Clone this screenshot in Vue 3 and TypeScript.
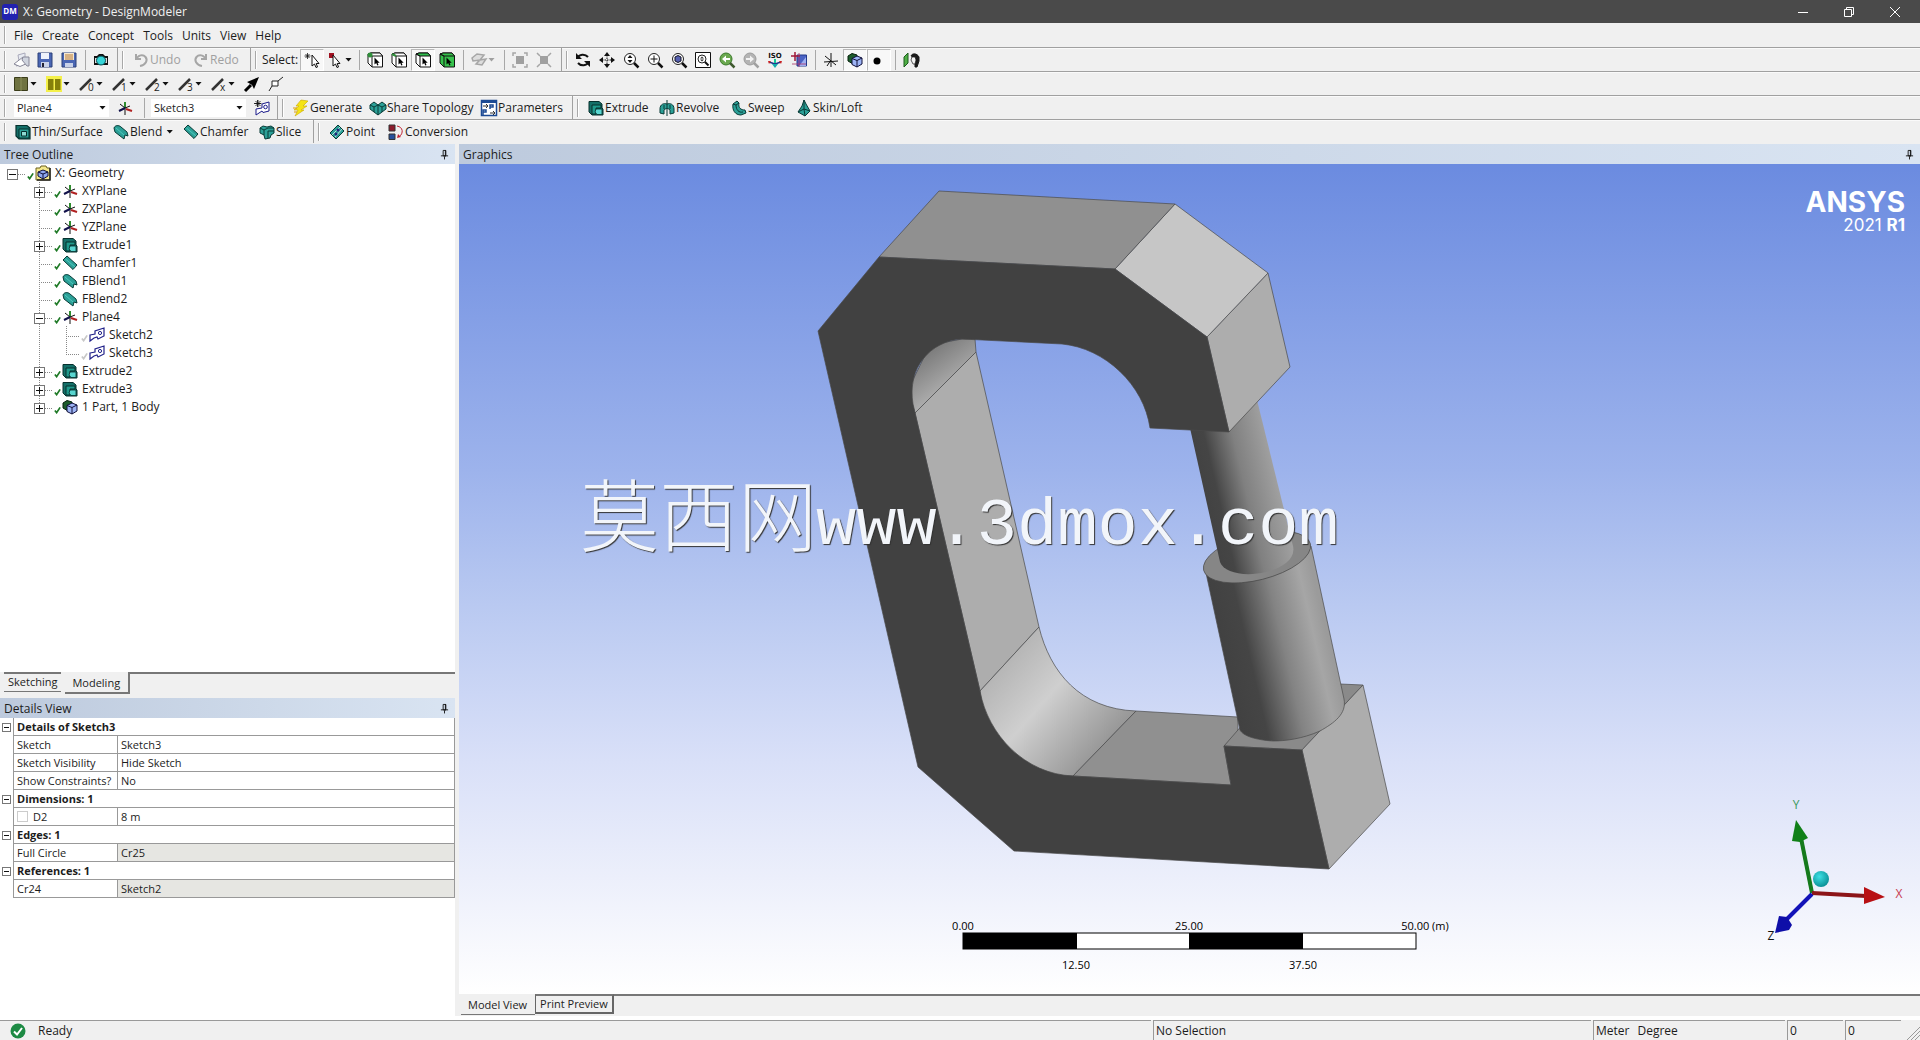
<script setup lang="ts">
import { ref } from 'vue'

interface ToolItem {
  kind: 'icon' | 'sep' | 'label' | 'combo'
  icon?: string
  text?: string
  title?: string
  width?: number
  caret?: boolean
  pressed?: boolean
  disabled?: boolean
  mid?: boolean
  options?: string[]
}

interface TreeNode {
  level: number
  text: string
  icon: string
  box?: 'plus' | 'minus'
  dim?: boolean
  last?: boolean
}

interface DetailRow {
  head?: boolean
  name: string
  value?: string
  check?: boolean
  locked?: boolean
}

const teal = '#1f9a8c'
const cube = (fill: string, top: string) =>
  `<path d="M1 2 4 1H13L15.500 4V15H5L1 11Z" fill="${fill}" stroke="#111"/><path d="M1 2 4 1H13L15.500 4H5Z" fill="${top}" stroke="#111"/><path d="M5 4V15M1 2 5 4" fill="none" stroke="#111"/><path d="M7.500 5.500V12.500L9.200 11 10.300 13.500 11.500 13 10.500 10.700H12.700Z" fill="#000"/>`
const axes =
  '<path d="M8 8V2" stroke="#2e8b2e" stroke-width="2"/><path d="M8 8V15M3 4 8 8 13 6" stroke="#111" fill="none"/><path d="M8 8 2 11" stroke="#11114a" stroke-width="2"/><path d="M9 9 15 11" stroke="#b02020" stroke-width="2"/>'
const lens = '<circle cx="7" cy="7" r="5.500" fill="#fff" stroke="#222"/><path d="M11 11 15.500 15.500" stroke="#111" stroke-width="2.500"/>'
const stroke = (n: string) =>
  `<path d="M1 14 12 3" stroke="#333" stroke-width="2.500"/><text x="9" y="15" font-family="Open Sans, sans-serif" font-size="10" fill="#222">${n}</text>`
const extrude = `<path d="M1 1.500H11L14 4V8L15 9V15H4L1 12Z" fill="#146f68" stroke="#06302d"/><path d="M4 5H13V8H8V14H4Z" fill="${teal}" stroke="#06302d"/><path d="M8 9H14V14.500H9L7 12Z" fill="#58d6d0" stroke="#06302d" stroke-width=".8"/>`
const blocks = '<path d="M1 4 5 1.500 10 3V9L6 12 1 9Z" fill="#1d5c2c" stroke="#06200c"/><path d="M5 6.500 10 4 15 6V12L10 15 5 12.500Z" fill="#9db4f5" stroke="#10103a"/><path d="M5 6.500 10 8.500 15 6M10 8.500V15" fill="none" stroke="#10103a"/>'

const icons: Record<string, string> = {
  open: '<path d="M5 3 12 1V12L3 14 6 9Z" fill="#e8ebf2" stroke="#aab"/><path d="M1 12 10 5 15 11 7 14.500Z" fill="#fff" stroke="#889"/><path d="M9 8 14 14H16V5H10Z" fill="#cfd4de" stroke="#889"/>',
  save: '<path d="M1 1H15V15H1Z" fill="#4a66b4" stroke="#2c4078"/><path d="M4 1H12V7H4Z" fill="#eef2fb"/><path d="M4 10H12V15H4Z" fill="#c9d2e8"/><path d="M5 11H7V15H5Z" fill="#223"/>',
  saveas: '<path d="M1 1H15V15H1Z" fill="#4a66b4" stroke="#2c4078"/><path d="M3 1H13V8H3Z" fill="#f6e9d2"/><path d="M4 3H12M4 5H12M4 7H12" stroke="#b77b36"/><path d="M4 11H12V15H4Z" fill="#c9d2e8"/>',
  camera: '<path d="M1 4H4L6 2H10L12 4H15V13H1Z" fill="#111"/><path d="M2 6H4V11H2ZM12 6H14V11H12Z" fill="#ddd"/><circle cx="8" cy="8.500" r="4.500" fill="#37d5d8" stroke="#0a4a50"/>',
  undo: '<path d="M3 2V7H8M3.500 7C5 3 10 2 12.500 5S13 13 7 14" fill="none" stroke="#a6a6a6" stroke-width="2"/>',
  redo: '<path d="M13 2V7H8M12.500 7C11 3 6 2 3.500 5S3 13 9 14" fill="none" stroke="#a6a6a6" stroke-width="2"/>',
  pick: '<path d="M3.500 1V7M.5 4H6.500M1.500 2 5.500 6M5.500 2 1.500 6" stroke="#111" stroke-width=".8"/><path d="M8 3V14L10.500 12 12 15.500 13.500 15 12.200 11.500H15Z" fill="#fff" stroke="#111"/>',
  mode: '<path d="M1 1H6V6H1Z" fill="#a01020"/><path d="M5 3V14L7.500 12 9 15.500 10.500 15 9.200 11.500H12Z" fill="#fff" stroke="#111"/>',
  selpoint: cube('#fff', '#fff') + '<circle cx="3" cy="3" r="2.500" fill="#2f8f3a"/>',
  seledge: cube('#fff', '#fff') + '<path d="M1 2 5 4" stroke="#2f8f3a" stroke-width="2"/>',
  selface: cube('#fff', '#2fbe4c'),
  selbody: cube('#36c24c', '#36c24c'),
  extend: '<path d="M1 6 6 2 13 3 9 8 2 9ZM5 12 9 8 15 7 11 13Z" fill="#ddd" stroke="#a6a6a6" stroke-width="1.500"/>',
  grow: '<path d="M4 4H12V12H4Z" fill="#a0a0a0"/><path d="M1 4V1H4M12 1H15V4M15 12V15H12M4 15H1V12" fill="none" stroke="#a6a6a6" stroke-width="1.500"/>',
  shrink: '<path d="M4 4H12V12H4Z" fill="#a0a0a0"/><path d="M1 1 4 4M15 1 12 4M15 15 12 12M1 15 4 12" fill="none" stroke="#a6a6a6" stroke-width="1.500"/>',
  rotate: '<path d="M2.500 6C4 2 10 1.500 13 5M13.500 10C12 14 6 14.500 3 11" fill="none" stroke="#111" stroke-width="2"/><path d="M1 1V7H7ZM15 15V9H9Z" fill="#111"/>',
  pan: '<path d="M8 3V13M3 8H13" stroke="#111" stroke-dasharray="1.500 1"/><path d="M8 0 11 4H5ZM8 16 5 12H11ZM0 8 4 5V11ZM16 8 12 11V5Z" fill="#111"/>',
  zoom: lens + '<path d="M7 3 9.500 6H4.500ZM7 11 4.500 8H9.500Z" fill="#111"/>',
  zoomin: lens + '<path d="M7 3.500V10.500M3.500 7H10.500" stroke="#111"/>',
  zoomfit: lens + '<path d="M4 5 7 3.500 10 5V9L7 10.500 4 9Z" fill="#5560b0" stroke="#112"/>',
  zoombox: '<path d="M.5 .5H15.500V15.500H.5Z" fill="#fff" stroke="#111"/><circle cx="7" cy="7" r="4" fill="#fff" stroke="#222"/><path d="M10 10 13.500 13.500" stroke="#111" stroke-width="2"/><path d="M7 4.500 9 6.500H5ZM7 9.500 5 7.500H9Z" fill="#333"/>',
  prev: '<circle cx="7" cy="7" r="6" fill="#6aa84f" stroke="#3a7a2a"/><path d="M3 7 7 3.500V6H11V8H7V10.500Z" fill="#fff"/><path d="M11 11 15.500 15.500" stroke="#3f5a30" stroke-width="2.500"/>',
  next: '<circle cx="7" cy="7" r="6" fill="#b4b4b4" stroke="#9c9c9c"/><path d="M11 7 7 3.500V6H3V8H7V10.500Z" fill="#f2f2f2"/><path d="M11 11 15.500 15.500" stroke="#a0a0a0" stroke-width="2.500"/>',
  iso: '<text x="8" y="6" text-anchor="middle" font-family="DejaVu Sans, sans-serif" font-weight="bold" font-size="7" fill="#111">ISO</text><path d="M8 12V7" stroke="#1c9" stroke-width="2"/><path d="M8 12 2 10M8 12 14 10" stroke="#238" stroke-width="1.500"/><path d="M1 9 4 9 2 12ZM15 9 12 9 14 12Z" fill="#c22"/><path d="M5 12 8 16 11 12Z" fill="#1aa"/>',
  lookat: '<path d="M6 3H15.500V14H6Z" fill="#4a63c4" stroke="#223a8c"/><path d="M8 14 15 5V14Z" fill="#9fb0f0"/><path d="M4 0V9M0 4H9" stroke="#a01838" stroke-width="1.500"/><path d="M8 1V15M1 12H15" stroke="#a8326a" stroke-width=".8"/>',
  triad: '<path d="M8 1V15M1 10 15 9M2 4 13 13M4 14 8 8" stroke="#111" fill="none"/>',
  bodies: blocks,
  dot: '<circle cx="6" cy="9" r="3.500" fill="#000"/>',
  look: '<path d="M1 5 5 1V11L1 15Z" fill="#4fae45" stroke="#1c5c1c"/><path d="M8 4C9 1 14 1 16 5V9L14 15H12V12" fill="#1a1a1a" stroke="#1a1a1a"/><path d="M9 5H12L13 8 12 12H10L9 10 8 8Z" fill="#f4f4f4" stroke="#1a1a1a" stroke-width=".7"/>',
  sheet: '<path d="M1.500 1.500H14.500V14.500H1.500Z" fill="#6f7341" stroke="#3a3c1a"/><path d="M8 1V15" stroke="#8b8f5a"/>',
  sheets: '<path d="M0 0H16V16H0Z" fill="#f4f04a"/><path d="M2 3H7.500V14H2ZM9 3H14.500V14H9Z" fill="#85800a"/>',
  e0: stroke('0'), e1: stroke('1'), e2: stroke('2'), e3: stroke('3'), ex: stroke('x'),
  arrowbig: '<path d="M1 15 7 9" stroke="#000" stroke-width="3"/><path d="M3 6 15 1 10 13 8 9Z" fill="#000"/>',
  vertex: '<path d="M4 5H10V10H4ZM10 5 15 1M4 10 1 15" fill="#fff" stroke="#222"/>',
  axes,
  newsketch: '<path d="M4 0V7M.5 3.500H7.500M1.500 1 6.500 6M6.500 1 1.500 6" stroke="#111" stroke-width=".8"/><path d="M2 9 8 8V4L15 2V11L9 12.500 8 11 2 15Z" fill="#fff" stroke="#1a1a8a"/><path d="M3.500 0V7M0 3.500H7" stroke="#111" stroke-width=".8"/><circle cx="11.500" cy="7" r="1.800" fill="#fff" stroke="#1a1a8a"/>',
  bolt: '<path d="M8 0 15 1 10 6H14L8 10H11L2 16 5 10H1L6 6H3Z" fill="#f5e414" stroke="#c9a800" stroke-width=".6"/><path d="M0 8H4M1 12H4" stroke="#d99a10"/>',
  share: '<path d="M0 5 4 2 8 5 12 2 16 5V9L8 15 0 9Z" fill="#2ba097" stroke="#083a36"/><path d="M0 5 4 7 8 5 12 7 16 5M4 7V12M12 7V12M8 5V15" fill="none" stroke="#083a36"/>',
  params: '<path d="M.5 .5H15.500V15.500H.5Z" fill="#fff" stroke="#1c4a94" stroke-width="1.500"/><path d="M0 0H16V3H0Z" fill="#1c4a94"/><path d="M9 9V5H12V7H9M2 15V10H5V12H2" stroke="#1c4a94" stroke-width="1.500" fill="none"/><path d="M2 6H7M5 4 7 6 5 8M9 13H14M12 11 14 13 12 15" stroke="#333" fill="none"/>',
  extrude,
  revolve: '<path d="M1 9C1 4 5 3 8 4 11 3 15 4 15 9V13L11 14V10C9 8 7 8 5 10V14L1 13Z" fill="#2ba097" stroke="#083a36"/><path d="M8 0V16M5 5V9M11 5V9" stroke="#083a36"/>',
  sweep: '<path d="M2 4 6 1 8 3C7 8 10 10 14 10L15 13 10 15C4 15 1 10 2 4Z" fill="#2ba097" stroke="#083a36"/><path d="M2 4 5 5 8 3M5 5C5 10 8 13 12 12" fill="none" stroke="#083a36"/>',
  skin: '<path d="M8 0 10 4 14 11 9 16 2 12 6 6Z" fill="#2ba097" stroke="#083a36"/><path d="M8 0 8 9 2 12M8 9 14 11M8 9 9 16" fill="none" stroke="#083a36"/>',
  thin: '<path d="M1 1.500H12L15 4V15H4L1 12Z" fill="#146f68" stroke="#06302d" stroke-width="1.200"/><path d="M4 5H14V14H4Z" fill="#2ba097" stroke="#06302d"/><path d="M6.500 7.500H11.500V12H6.500Z" fill="#8edbd3" stroke="#06302d"/>',
  blend: '<path d="M1 4C2 1 6 1 8 3L14 8 15 12 12 11 11 15 2 8Z" fill="#2ba097" stroke="#083a36"/><path d="M3 4 11 11" stroke="#50c8be"/>',
  chamfer: '<path d="M1 5 5 1 15 10 11 14.500Z" fill="#2ba097" stroke="#083a36"/><path d="M3.500 4 13 12" stroke="#50c8be"/>',
  slice: '<path d="M1 4 4 2 8 3 12 2 15 4V9L12 11 11 14 6 15 5 11 1 9Z" fill="#2ba097" stroke="#083a36"/><path d="M1 4 5 6 9 4M5 6V11M9 4 15 4M9 7 15 7M9 7V14" fill="none" stroke="#083a36"/>',
  point: '<path d="M1 9 9 1 15 7 7 15Z" fill="#2ba097" stroke="#083a36"/><path d="M3 11 11 3M6 13 13 5" stroke="#d8f4f0" stroke-width=".8"/><circle cx="9" cy="6" r="1.500" fill="#22267a"/><circle cx="7" cy="10" r="1.500" fill="#22267a"/>',
  convert: '<path d="M1 1H7V7H1Z" fill="#8c1c2c" stroke="#333"/><path d="M1 10H7V15.500H1Z" fill="#274f9a" stroke="#333"/><path d="M9 2C15 3 16 9 11 13" fill="none" stroke="#c02030"/><path d="M9 14 10 10 13 13Z" fill="#c02030"/>',
  model: '<path d="M1 3H5L6 1H11L12 3H15V15H1Z" fill="#f4e88a" stroke="#6a6020"/><path d="M15 3V15H2" fill="none" stroke="#222" stroke-width="1.500"/><path d="M3 7 8 5 13 7V11L8 14 3 11Z" fill="#8fa8f0" stroke="#10103a"/><path d="M3 7 8 9 13 7M8 9V14" fill="none" stroke="#10103a"/>',
  sketch: '<path d="M1 8 6 7V4L15 1V9L9 12 8 10 5 11 1 14Z" fill="#fff" stroke="#22228a" stroke-width="1.200"/><circle cx="11" cy="6" r="1.600" fill="#fff" stroke="#22228a"/>',
}

const btn = (icon: string, title: string, extra: Partial<ToolItem> = {}): ToolItem => ({ kind: 'icon', icon, title, width: 24, ...extra })
const cmd = (icon: string, text: string, width: number, extra: Partial<ToolItem> = {}): ToolItem => ({ kind: 'icon', icon, text, title: text, width, ...extra })
const sep: ToolItem = { kind: 'sep', width: 8 }

const bars: ToolItem[][][] = [
  [
    [btn('open', 'Open'), btn('save', 'Save'), btn('saveas', 'Save As'), sep, btn('camera', 'Image Capture', { width: 28 })],
    [cmd('undo', 'Undo', 60, { disabled: true }), cmd('redo', 'Redo', 63, { disabled: true })],
    [
      { kind: 'label', text: 'Select:', width: 40 },
      btn('pick', 'New Selection', { pressed: true }),
      btn('mode', 'Select Mode', { width: 31, caret: true }),
      sep,
      btn('selpoint', 'Points'), btn('seledge', 'Edges'), btn('selface', 'Faces', { pressed: true }), btn('selbody', 'Bodies'),
      sep,
      btn('extend', 'Extend Selection', { width: 33, caret: true, disabled: true }),
      sep,
      btn('grow', 'Expand', { disabled: true }), btn('shrink', 'Shrink', { width: 29, disabled: true }),
    ],
    [
      btn('rotate', 'Rotate'), btn('pan', 'Pan'), btn('zoom', 'Zoom'), btn('zoomin', 'Zoom In'), btn('zoomfit', 'Zoom to Fit'),
      btn('zoombox', 'Box Zoom'), btn('prev', 'Previous View'), btn('next', 'Next View', { disabled: true }), btn('iso', 'Isometric View'), btn('lookat', 'Look At Plane'),
      sep,
      btn('triad', 'Display Plane'), btn('bodies', 'Display Model', { pressed: true }), btn('dot', 'Display Points', { pressed: true }),
      sep,
      btn('look', 'Look At Face'),
    ],
  ],
  [
    [
      btn('sheet', 'Face Color', { width: 33, caret: true }), btn('sheets', 'Edge Color', { width: 33, caret: true }),
      btn('e0', 'Edge Joints 0', { width: 33, caret: true }), btn('e1', 'Edge Joints 1', { width: 33, caret: true }),
      btn('e2', 'Edge Joints 2', { width: 33, caret: true }), btn('e3', 'Edge Joints 3', { width: 33, caret: true }),
      btn('ex', 'Edge Joints x', { width: 33, caret: true }), btn('arrowbig', 'Edge Direction'), btn('vertex', 'Display Vertices'),
    ],
  ],
  [
    [
      { kind: 'combo', title: 'Active Plane', options: ['Plane4', 'XYPlane', 'ZXPlane', 'YZPlane'] },
      btn('axes', 'New Plane', { width: 31, mid: true }),
      sep,
      { kind: 'combo', title: 'Active Sketch', options: ['Sketch3', 'Sketch2'] },
      btn('newsketch', 'New Sketch', { width: 31, mid: true }),
    ],
    [cmd('bolt', 'Generate', 77), cmd('share', 'Share Topology', 111), cmd('params', 'Parameters', 97)],
    [cmd('extrude', 'Extrude', 71), cmd('revolve', 'Revolve', 72), cmd('sweep', 'Sweep', 65), cmd('skin', 'Skin/Loft', 80)],
  ],
  [
    [cmd('thin', 'Thin/Surface', 98), cmd('blend', 'Blend', 70, { caret: true }), cmd('chamfer', 'Chamfer', 76), cmd('slice', 'Slice', 60)],
    [cmd('point', 'Point', 59), cmd('convert', 'Conversion', 90)],
  ],
]

const menus = ['File', 'Create', 'Concept', 'Tools', 'Units', 'View', 'Help']

const tree: TreeNode[] = [
  { level: 0, text: 'X: Geometry', icon: 'model', box: 'minus' },
  { level: 1, text: 'XYPlane', icon: 'axes', box: 'plus' },
  { level: 1, text: 'ZXPlane', icon: 'axes' },
  { level: 1, text: 'YZPlane', icon: 'axes' },
  { level: 1, text: 'Extrude1', icon: 'extrude', box: 'plus' },
  { level: 1, text: 'Chamfer1', icon: 'chamfer' },
  { level: 1, text: 'FBlend1', icon: 'blend' },
  { level: 1, text: 'FBlend2', icon: 'blend' },
  { level: 1, text: 'Plane4', icon: 'axes', box: 'minus' },
  { level: 2, text: 'Sketch2', icon: 'sketch', dim: true },
  { level: 2, text: 'Sketch3', icon: 'sketch', dim: true, last: true },
  { level: 1, text: 'Extrude2', icon: 'extrude', box: 'plus' },
  { level: 1, text: 'Extrude3', icon: 'extrude', box: 'plus' },
  { level: 1, text: '1 Part, 1 Body', icon: 'bodies', box: 'plus', last: true },
]

const details: DetailRow[] = [
  { head: true, name: 'Details of Sketch3' },
  { name: 'Sketch', value: 'Sketch3' },
  { name: 'Sketch Visibility', value: 'Hide Sketch' },
  { name: 'Show Constraints?', value: 'No' },
  { head: true, name: 'Dimensions: 1' },
  { name: 'D2', value: '8 m', check: true },
  { head: true, name: 'Edges: 1' },
  { name: 'Full Circle', value: 'Cr25', locked: true },
  { head: true, name: 'References: 1' },
  { name: 'Cr24', value: 'Sketch2', locked: true },
]

const leftTab = ref('Modeling')
const viewTab = ref('Model View')
const dimParam = ref(false)
</script>

<template>
  <div class="app">
    <header class="title">
      <span class="logo">DM</span>
      <h1>X: Geometry - DesignModeler</h1>
      <button class="win" aria-label="Minimize"><svg viewBox="0 0 12 12"><path d="M1 6.500H11" /></svg></button>
      <button class="win" aria-label="Restore"><svg viewBox="0 0 12 12"><path d="M1.500 3.500H8.500V10.500H1.500ZM3.500 3V1.500H10.500V8.500H9" /></svg></button>
      <button class="win" aria-label="Close"><svg viewBox="0 0 12 12"><path d="M1 1 11 11M11 1 1 11" /></svg></button>
    </header>

    <nav class="menu">
      <span class="grip"></span>
      <button v-for="m in menus" :key="m">{{ m }}</button>
    </nav>

    <div v-for="(bar, b) in bars" :key="b" class="bar" role="toolbar">
      <div v-for="(group, g) in bar" :key="g" class="group" :class="{ open: g === bar.length - 1 && b !== 3 }">
        <span class="grip"></span>
        <template v-for="(item, i) in group" :key="i">
          <span v-if="item.kind === 'sep'" class="sep"></span>
          <span v-else-if="item.kind === 'label'" class="barlabel" :style="{ width: item.width + 'px' }">{{ item.text }}</span>
          <span v-else-if="item.kind === 'combo'" class="combo">
            <select :aria-label="item.title">
              <option v-for="o in item.options" :key="o">{{ o }}</option>
            </select>
            <i class="caret"></i>
          </span>
          <button
            v-else
            class="tool"
            :class="{ pressed: item.pressed, wide: item.text, mid: item.mid }"
            :style="{ width: item.width + 'px' }"
            :title="item.title"
            :disabled="item.disabled"
          >
            <svg viewBox="0 0 16 16" v-html="icons[item.icon ?? '']"></svg>
            <span v-if="item.text">{{ item.text }}</span>
            <i v-if="item.caret" class="caret"></i>
          </button>
        </template>
      </div>
    </div>

    <main class="work">
      <aside class="side">
        <h2 class="phead">
          Tree Outline
          <svg viewBox="0 0 10 12"><path d="M3.500 1.500H6.500V7.500H3.500ZM6 1V8M1 7.500H9M5 8V11.500" /></svg>
        </h2>
        <ul class="tree">
          <li v-for="n in tree" :key="n.text">
            <span v-if="n.level > 0" class="pad"></span>
            <span v-if="n.level > 1" class="pad guide"></span>
            <span class="branch" :class="{ guide: n.level > 0, end: n.last }">
              <i v-if="n.box" class="box" :class="n.box"></i>
            </span>
            <svg class="tick" :class="{ dim: n.dim }" viewBox="0 0 8 8"><path d="M1 4.500 3 7 7 1" /></svg>
            <svg class="nicon" viewBox="0 0 16 16" v-html="icons[n.icon]"></svg>
            <span>{{ n.text }}</span>
          </li>
        </ul>
        <div class="tabs left" role="tablist">
          <button
            v-for="t in ['Sketching', 'Modeling']"
            :key="t"
            role="tab"
            :class="{ on: leftTab === t }"
            @click="leftTab = t"
          >{{ t }}</button>
          <span class="rest"></span>
        </div>
        <h2 class="phead">
          Details View
          <svg viewBox="0 0 10 12"><path d="M3.500 1.500H6.500V7.500H3.500ZM6 1V8M1 7.500H9M5 8V11.500" /></svg>
        </h2>
        <div class="details">
          <table>
            <colgroup><col class="c0" /><col class="c1" /><col /></colgroup>
            <tbody>
              <tr v-for="d in details" :key="d.name">
                <td class="gutter"><i v-if="d.head" class="box minus small"></i></td>
                <th v-if="d.head" colspan="2" scope="colgroup">{{ d.name }}</th>
                <template v-else>
                  <td>
                    <label v-if="d.check"><input v-model="dimParam" type="checkbox" />{{ d.name }}</label>
                    <template v-else>{{ d.name }}</template>
                  </td>
                  <td :class="{ locked: d.locked }">{{ d.value }}</td>
                </template>
              </tr>
            </tbody>
          </table>
        </div>
      </aside>

      <section class="gfx">
        <h2 class="phead">
          Graphics
          <svg viewBox="0 0 10 12"><path d="M3.500 1.500H6.500V7.500H3.500ZM6 1V8M1 7.500H9M5 8V11.500" /></svg>
        </h2>
        <div class="canvas">
          <svg class="scene" viewBox="459 164 1461 830">
            <defs>
              <linearGradient id="rod" gradientUnits="userSpaceOnUse" x1="1205" y1="510" x2="1283" y2="492">
                <stop offset="0" stop-color="#424242" /><stop offset=".2" stop-color="#454545" />
                <stop offset=".55" stop-color="#808080" /><stop offset="1" stop-color="#a3a3a3" />
              </linearGradient>
              <linearGradient id="sleeve" gradientUnits="userSpaceOnUse" x1="1222" y1="655" x2="1326" y2="631">
                <stop offset="0" stop-color="#414141" /><stop offset=".25" stop-color="#454545" />
                <stop offset=".58" stop-color="#838383" /><stop offset=".88" stop-color="#a6a6a6" /><stop offset="1" stop-color="#9b9b9b" />
              </linearGradient>
              <linearGradient id="bend" gradientUnits="userSpaceOnUse" x1="1000" y1="650" x2="1112" y2="748">
                <stop offset="0" stop-color="#b0b0b0" /><stop offset=".45" stop-color="#cfcfcf" /><stop offset="1" stop-color="#929292" />
              </linearGradient>
              <linearGradient id="bendtop" gradientUnits="userSpaceOnUse" x1="928" y1="352" x2="952" y2="386">
                <stop offset="0" stop-color="#7c7c7c" /><stop offset="1" stop-color="#adadad" />
              </linearGradient>
              <radialGradient id="ball" cx=".4" cy=".35" r=".65">
                <stop offset="0" stop-color="#3fe0e4" /><stop offset="1" stop-color="#0b9298" />
              </radialGradient>
            </defs>

            <g class="edges">
              <path fill="#adadad" d="M915 413 976 352 1039 627 980 691Z" />
              <path fill="url(#bendtop)" d="M962 339H975L976 352 915 413 908 390 930 345Z" />
              <path fill="url(#bend)" d="M980 691 1039 627C1050 672 1080 709 1136 711L1073 776C1020 775 985 740 980 691Z" />
              <path fill="#909090" d="M1073 776 1136 711 1238 717V732L1224 746 1231 785Z" />
              <path fill="#8a8a8a" d="M1224 746 1244 723 1300 684 1340 684 1363 685 1302 750Z" />
              <path fill="#adadad" d="M1302 750 1363 685 1390 804 1329 869Z" />
              <path fill="url(#sleeve)" d="M1206 573 1311 546 1344 699C1347 714 1334 723 1320 731 1302 739 1285 741 1273 741 1256 740 1243 736 1240 730Z" />
              <ellipse fill="#868686" cx="1257" cy="557" rx="55" ry="23" transform="rotate(-14 1257 557)" />
              <path fill="url(#rod)" stroke="none" d="M1190 428 1257 400 1293 546C1296 559 1282 568 1266 572 1245 577 1224 573 1220 562Z" />
              <path fill="#adadad" d="M1207 337 1268 273 1290 367 1229 432Z" />
              <path fill="#c6c6c6" d="M1115 269 1175 204 1268 273 1207 337Z" />
              <path fill="#909090" d="M879 257 939 191 1175 204 1115 269Z" />
              <path
                fill="#414141"
                d="M879 257 1115 269 1207 337 1229 432 1150 428C1144 385 1105 348 1062 344L962 339C930 341 907 368 913 404L980 691C988 735 1025 774 1073 776L1231 785 1224 746 1302 750 1329 869 1014 851 918 767 818 331Z"
              />
            </g>

            <g class="ruler">
              <rect x="963" y="933" width="453" height="16" fill="#fff" stroke="#000" />
              <path d="M963 933H1077V949H963ZM1189 933H1303V949H1189Z" />
              <text x="963" y="930">0.00</text><text x="1189" y="930">25.00</text><text x="1425" y="930">50.00 (m)</text>
              <text x="1076" y="969">12.50</text><text x="1303" y="969">37.50</text>
            </g>

            <g class="triad">
              <circle cx="1821" cy="879" r="8" fill="url(#ball)" />
              <path d="M1812 893 1801 838" stroke="#157a1c" /><path d="M1796 820 1808 838 1800 842 1792 841Z" fill="#108018" />
              <path d="M1812 893 1866 896" stroke="#8c1418" /><path d="M1864 887 1885 897 1864 904Z" fill="#b81014" />
              <path d="M1812 894 1785 921" stroke="#1212b8" /><path d="M1775 933 1779 916 1787 917 1792 925 1789 930Z" fill="#0e0ea8" />
              <text x="1796" y="809" fill="#3c9a5c">Y</text>
              <text x="1899" y="898" fill="#c83c50">X</text>
              <text x="1771" y="940" fill="#111">Z</text>
            </g>

            <g class="mark">
              <text x="580" y="546" class="han">莫西网</text>
              <text x="816" y="544" class="url">www.3dmox.com</text>
            </g>
          </svg>
          <div class="brand"><strong>ANSYS</strong><span>2021 <b>R1</b></span></div>
        </div>
        <div class="tabs right" role="tablist">
          <button
            v-for="t in ['Model View', 'Print Preview']"
            :key="t"
            role="tab"
            :class="{ on: viewTab === t }"
            @click="viewTab = t"
          >{{ t }}</button>
          <span class="rest"></span>
        </div>
      </section>
    </main>

    <footer class="status">
      <div class="cell grow">
        <svg class="ok" viewBox="0 0 16 16"><circle cx="8" cy="8" r="7.500" fill="#1d8a44" /><path d="M4 8.500 7 11.500 12 5" fill="none" stroke="#fff" stroke-width="2" /></svg>
        Ready
      </div>
      <div class="cell sel">No Selection</div>
      <div class="cell unit"><span>Meter</span><span>Degree</span></div>
      <div class="cell num">0</div>
      <div class="cell num">0</div>
      <svg class="size" viewBox="0 0 14 14"><path d="M1 14 14 1M5 14 14 5M9 14 14 9" /></svg>
    </footer>
  </div>
</template>

<style>
body {
  margin: 0;
}
</style>

<style scoped>
.app {
  display: flex;
  flex-direction: column;
  height: 100vh;
  min-height: 700px;
  overflow: hidden;
  background: #f0f0f0;
  color: #1c1c1c;
  font-family: 'Open Sans', 'Noto Sans', sans-serif;
  font-size: 12px;
  line-height: 16px;
}
.app * {
  box-sizing: border-box;
}
button,
select {
  margin: 0;
  padding: 0;
  border: 0;
  background: none;
  color: inherit;
  font: inherit;
}
h1,
h2 {
  margin: 0;
  font-size: 12px;
  font-weight: 400;
}

.title {
  display: flex;
  flex: none;
  align-items: center;
  height: 23px;
  background: #4a4a4a;
  color: #f0f0f0;
}
.title h1 {
  flex: 1;
  padding-left: 5px;
}
.logo {
  width: 16px;
  height: 16px;
  margin-left: 2px;
  border-radius: 3px;
  background: #2222b0;
  color: #fff;
  font-size: 8px;
  font-weight: 700;
  line-height: 14px;
  text-align: center;
}
.win {
  display: flex;
  align-items: center;
  justify-content: center;
  width: 46px;
  height: 20px;
}
.win:last-child {
  margin-right: 2px;
}
.win svg {
  width: 12px;
  height: 12px;
  fill: none;
  stroke: #fff;
}

.menu {
  display: flex;
  flex: none;
  align-items: center;
  height: 24px;
}
.menu button {
  padding: 2px 4px 0 5px;
}
.grip {
  flex: none;
  width: 9px;
  height: 18px;
  border-left: 4px solid transparent;
  background: linear-gradient(90deg, #a8a8a8 1px, #fff 1px 2px, transparent 2px) no-repeat;
}

.bar {
  display: flex;
  flex: none;
  height: 24px;
  border-top: 1px solid #a0a0a0;
  box-shadow: inset 0 1px #fafafa;
}
.group {
  display: flex;
  align-items: center;
  border-right: 1px solid #a0a0a0;
}
.group.open,
.bar:has(+ .work) .group:last-child {
  border-right: 0;
}
.sep {
  width: 8px;
  height: 20px;
  background: linear-gradient(90deg, transparent 4px, #a8a8a8 4px 5px, transparent 5px);
}
.barlabel {
  padding-left: 2px;
  white-space: nowrap;
}
.tool {
  display: flex;
  align-items: center;
  height: 22px;
  padding-left: 4px;
  white-space: nowrap;
}
.tool svg {
  flex: none;
  width: 16px;
  height: 16px;
  overflow: visible;
}
.tool.wide svg {
  margin: 0 1px 0 2px;
}
.tool.mid {
  justify-content: center;
  padding-left: 0;
}
.tool.pressed {
  border: 1px solid #b8b8b8;
  border-right-color: #fff;
  border-bottom-color: #fff;
  padding-left: 3px;
  background: #f8f8f8;
}
.tool:disabled {
  color: #a0a0a0;
}
.caret {
  flex: none;
  width: 7px;
  height: 4px;
  margin-left: 1px;
  background: #111;
  clip-path: polygon(0 0, 100% 0, 50% 100%);
}
.tool:disabled .caret {
  background: #a0a0a0;
}
.tool.wide .caret {
  margin-left: 4px;
}
.combo {
  position: relative;
  width: 95px;
  height: 18px;
  margin-left: 5px;
  background: #fff;
}
.sep + .combo {
  margin-left: 3px;
}
.combo select {
  width: 100%;
  height: 18px;
  padding-left: 3px;
  font-size: 11px;
  appearance: none;
}
.combo .caret {
  position: absolute;
  top: 7px;
  right: 3px;
  pointer-events: none;
}

.work {
  display: flex;
  flex: 1;
  min-height: 0;
  margin-top: 1px;
}
.side {
  display: flex;
  flex: none;
  flex-direction: column;
  width: 455px;
}
.phead {
  display: flex;
  flex: none;
  align-items: center;
  justify-content: space-between;
  height: 20px;
  padding: 2px 6px 0 4px;
  background: linear-gradient(90deg, #bdcadd, #d9e4f2);
}
.phead svg {
  width: 9px;
  height: 11px;
  margin-bottom: 2px;
  fill: none;
  stroke: #111;
}

.tree {
  flex: 1;
  min-height: 0;
  margin: 0;
  padding: 0;
  overflow: hidden;
  background: #fff;
  list-style: none;
}
.tree li {
  display: flex;
  align-items: center;
  height: 18px;
}
.pad {
  flex: none;
  width: 27px;
  height: 18px;
}
.branch {
  display: flex;
  flex: none;
  align-items: center;
  width: 29px;
  height: 18px;
  padding-left: 7px;
  background: repeating-linear-gradient(90deg, #888 0 1px, transparent 1px 2px) 12px 10px / 14px 1px no-repeat;
}
.pad.guide {
  background: repeating-linear-gradient(#888 0 1px, transparent 1px 2px) 12px 0 / 1px 18px no-repeat;
}
.branch.guide {
  background:
    repeating-linear-gradient(90deg, #888 0 1px, transparent 1px 2px) 12px 10px / 14px 1px no-repeat,
    repeating-linear-gradient(#888 0 1px, transparent 1px 2px) 12px 0 / 1px 18px no-repeat;
}
.branch.end {
  background:
    repeating-linear-gradient(90deg, #888 0 1px, transparent 1px 2px) 12px 10px / 14px 1px no-repeat,
    repeating-linear-gradient(#888 0 1px, transparent 1px 2px) 12px 0 / 1px 10px no-repeat;
}
.box {
  display: block;
  width: 11px;
  height: 11px;
  margin-top: 2px;
  border: 1px solid #777;
  background: linear-gradient(#111, #111) center / 7px 1px no-repeat #fff;
}
.box.plus {
  background:
    linear-gradient(#111, #111) center / 7px 1px no-repeat,
    linear-gradient(#111, #111) center / 1px 7px no-repeat,
    #fff;
}
.box.small {
  width: 9px;
  height: 9px;
  margin: 0 0 0 2px;
  background-size: 5px 1px;
}
.tick {
  flex: none;
  width: 7px;
  height: 8px;
  margin: 6px 0 0 -2px;
  fill: none;
  stroke: #1f7a26;
  stroke-width: 2;
}
.tick.dim {
  stroke: #c8c8c8;
}
.nicon {
  flex: none;
  width: 16px;
  height: 16px;
  margin: 0 4px 0 1px;
}

.tabs {
  display: flex;
  flex: none;
  align-items: flex-start;
}
.tabs .rest {
  flex: 1;
  border-top: 2px solid #777;
}
.left {
  height: 26px;
}
.left button {
  height: 20px;
  margin-left: 4px;
  padding: 0 4px 2px;
  border-top: 2px solid #777;
  border-bottom: 1px solid #777;
  font-size: 11px;
}
.left button.on {
  height: 22px;
  margin-left: 4px;
  padding: 2px 8px 0 7px;
  border-top: 0;
  border-right: 2px solid #777;
  border-bottom: 2px solid #777;
}
.right {
  height: 22px;
}
.right button {
  height: 20px;
  padding: 0 4px;
  border: 1px solid #666;
  border-top: 2px solid #777;
  border-right-width: 2px;
  border-bottom-width: 2px;
  font-size: 11px;
}
.right button.on {
  height: 21px;
  margin-left: 2px;
  padding: 2px 8px 0 7px;
  border: 0;
  border-bottom: 1px solid #777;
}

.details {
  height: 298px;
  background: #fff;
}
table {
  width: 100%;
  border-spacing: 0;
  table-layout: fixed;
  font-size: 11px;
}
.c0 {
  width: 14px;
}
.c1 {
  width: 104px;
}
td,
th {
  height: 18px;
  padding: 0 3px;
  border-right: 1px solid #999;
  border-bottom: 1px solid #999;
  line-height: 16px;
  text-align: left;
  white-space: nowrap;
}
.gutter {
  padding: 0;
  border-bottom: 0;
}
.locked {
  background: #e6e6e2;
}
td label {
  display: flex;
  align-items: center;
  gap: 5px;
}
td input {
  width: 11px;
  height: 11px;
  margin: 0;
  border: 1px solid #ccc;
  appearance: none;
}
td input:checked {
  background: #1f7a26;
}

.gfx {
  display: flex;
  flex: 1;
  flex-direction: column;
  min-width: 0;
  margin-left: 4px;
}
.canvas {
  position: relative;
  flex: 1;
  min-height: 0;
  overflow: hidden;
  background: linear-gradient(#6b8be0, #9db3ec 37%, #b9c9f1 53%, #d9e0f8 72%, #eceffb 86%, #fff);
}
.scene {
  display: block;
  width: 100%;
  height: 100%;
}
.edges {
  stroke: #4a4a4a;
  stroke-width: 0.7;
}
.ruler text {
  font-size: 11px;
  text-anchor: middle;
}
.triad path[stroke] {
  stroke-width: 4;
}
.triad text {
  font-size: 12px;
  text-anchor: middle;
}
.mark {
  fill: #f2f5fa;
  text-shadow: 1px 1px 1px #333;
}
.han {
  font-family: 'Noto Sans CJK SC', sans-serif;
  font-size: 79px;
  font-weight: 300;
}
.url {
  font-family: 'Liberation Mono', monospace;
  font-size: 67px;
}
.brand {
  position: absolute;
  top: 24px;
  right: 15px;
  display: flex;
  flex-direction: column;
  color: #fff;
  font-family: Inter, sans-serif;
  text-align: right;
}
.brand strong {
  font-size: 28px;
  line-height: 28px;
}
.brand span {
  font-size: 17px;
  line-height: 18px;
}

.status {
  display: flex;
  flex: none;
  height: 24px;
  padding-top: 4px;
  background: linear-gradient(#fff 4px, #f0f0f0 4px);
}
.cell {
  display: flex;
  align-items: center;
  margin-right: 2px;
  padding-left: 2px;
  border-top: 1px solid #999;
  border-left: 1px solid #999;
}
.grow {
  flex: 1;
  gap: 12px;
  padding-left: 10px;
  border-left: 0;
}
.ok {
  width: 16px;
  height: 16px;
}
.sel {
  width: 438px;
}
.unit {
  gap: 8px;
  width: 192px;
}
.num {
  width: 56px;
}
.size {
  align-self: flex-end;
  width: 14px;
  height: 14px;
  margin-left: 3px;
  stroke: #999;
}
</style>
